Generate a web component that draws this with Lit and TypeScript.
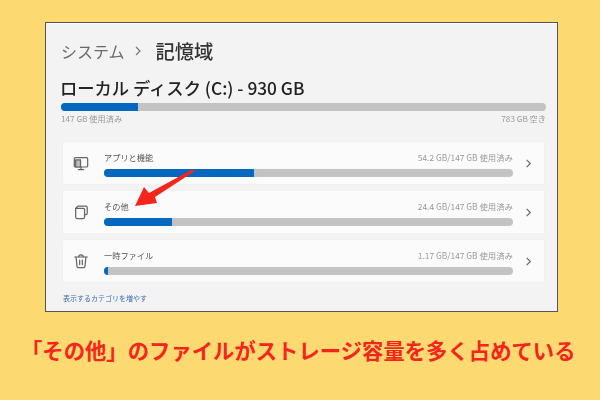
import { LitElement, html, css, svg } from "lit";
import { customElement } from "lit/decorators.js";

const icons = {
  apps: svg`<path d="M3 3h12a1.5 1.5 0 0 1 1.5 1.5v7.5a1.5 1.5 0 0 1-1.5 1.5H3a1.5 1.5 0 0 1-1.5-1.5V4.500A1.500 1.500 0 0 1 3 3z"/><path d="M6 16.500h6M9 13.500v3"/><path d="M3 5.500h5.500v8H3z" fill="#bdbdbd"/>`,
  doc: svg`<path d="M3 5h8.500a1.500 1.500 0 0 1 1.500 1.500v8.500a1.500 1.500 0 0 1-1.500 1.500H5A2 2 0 0 1 3 14.500z"/><path d="M3 5 5.500 2.500h9a1.500 1.500 0 0 1 1.500 1.500v6.500a1.500 1.500 0 0 1-1.500 1.500H13"/>`,
  trash: svg`<path d="M2 4.500h14"/><path d="M6.500 4.500a2.500 2.500 0 0 1 5 0"/><path d="M3.500 4.500l1 10.500a1.500 1.500 0 0 0 1.500 1.500h6a1.500 1.500 0 0 0 1.500-1.500l1-10.500"/><path d="M7.500 8v5M10.500 8v5"/>`,
};

const rows = [
  { icon: icons.apps, label: "アプリと機能", used: "54.2 GB/147 GB 使用済み", pct: 36.7 },
  { icon: icons.doc, label: "その他", used: "24.4 GB/147 GB 使用済み", pct: 16.6 },
  { icon: icons.trash, label: "一時ファイル", used: "1.17 GB/147 GB 使用済み", pct: 0.9 },
];

@customElement("app-root")
export class AppRoot extends LitElement {
  static styles = css`
    :host {
      display: block;
      width: 600px;
      height: 400px;
      overflow: hidden;
      background: #fcd971;
      font-family: "Noto Sans CJK JP", "Noto Sans", sans-serif;
    }
    .page {
      display: flex;
      flex-direction: column;
      height: 400px;
      box-sizing: border-box;
      padding: 22px 42px 0 45px;
    }
    .window {
      position: relative;
      box-sizing: border-box;
      width: 513px;
      height: 290px;
      flex: none;
      background: #f3f3f3;
      border: 1px solid #555;
      box-shadow: inset 0 1px 0 #fff;
      padding: 14px 11px 0 15px;
      overflow: hidden;
    }
    .blur {
      filter: blur(0.5px);
      display: flex;
      flex-direction: column;
    }
    .crumbs {
      display: flex;
      align-items: center;
      height: 28px;
      font-size: 16px;
      color: #6a6a6a;
    }
    .crumbs svg {
      width: 10px;
      height: 10px;
      margin: 0 13px 0 8px;
      fill: none;
      stroke: #777;
      stroke-width: 1.2;
    }
    .crumbs b {
      color: #333;
      font-size: 19.3px;
      font-weight: 500;
    }
    .disk {
      margin: 10px 0 0 -1px;
      height: 26px;
      line-height: 26px;
      font-size: 17.3px;
      font-weight: 500;
      color: #222;
    }
    .track {
      height: 8px;
      border-radius: 4px;
      background: #c3c3c3;
      overflow: hidden;
    }
    .fill {
      height: 100%;
      background: #0467c0;
    }
    .main-track {
      margin-top: 2px;
      width: 485px;
    }
    .totals {
      display: flex;
      justify-content: space-between;
      width: 485px;
      margin-top: 2px;
      height: 11px;
      line-height: 11px;
      font-size: 8.2px;
      color: #999;
    }
    .cards {
      display: flex;
      flex-direction: column;
      gap: 5px;
      margin: 17px 0 0 1px;
      width: 483px;
    }
    .card {
      display: flex;
      align-items: center;
      box-sizing: border-box;
      height: 44px;
      padding-left: 10px;
      background: #fbfbfb;
      border: 1px solid #f0f0f0;
      border-radius: 3px;
    }
    .icon {
      width: 16px;
      height: 16px;
      flex: none;
      fill: none;
      stroke: #666;
      stroke-width: 1.4;
      stroke-linejoin: round;
      stroke-linecap: round;
    }
    .body {
      width: 409px;
      margin: 2px 0 0 15px;
      flex: none;
    }
    .line {
      display: flex;
      justify-content: space-between;
      align-items: center;
      height: 11px;
      margin-bottom: 6px;
      font-size: 8.2px;
      color: #555;
    }
    .line span:last-child {
      font-size: 8.4px;
      color: #999;
    }
    .chev {
      width: 9px;
      height: 9px;
      margin-left: 11px;
      fill: none;
      stroke: #666;
      stroke-width: 1.3;
    }
    .link {
      margin: 9px 0 0 2px;
      font-size: 7px;
      line-height: 12px;
      color: #3b6db0;
    }
    .arrow {
      position: absolute;
      left: -46px;
      top: -23px;
      width: 600px;
      height: 400px;
      fill: #f5251c;
      pointer-events: none;
    }
    .caption {
      margin: 22px 0 0 -24px;
      white-space: nowrap;
      font-size: 21.35px;
      line-height: 32px;
      font-weight: 700;
      color: #f5251c;
    }
  `;

  render() {
    return html`<div class="page">
      <div class="window">
        <div class="blur">
          <div class="crumbs">
            <span>システム</span>
            <svg viewBox="0 0 10 10"><path d="M3 1l4 4-4 4" /></svg>
            <b>記憶域</b>
          </div>
          <div class="disk">ローカル ディスク (C:) - 930 GB</div>
          <div class="track main-track"><div class="fill" style="width:15.9%"></div></div>
          <div class="totals"><span>147 GB 使用済み</span><span>783 GB 空き</span></div>
          <div class="cards">
            ${rows.map(
              (r) => html`<div class="card">
                <svg class="icon" viewBox="0 0 18 18">${r.icon}</svg>
                <div class="body">
                  <div class="line"><span>${r.label}</span><span>${r.used}</span></div>
                  <div class="track"><div class="fill" style="width:${r.pct}%"></div></div>
                </div>
                <svg class="chev" viewBox="0 0 10 10"><path d="M3 1l4 4-4 4" /></svg>
              </div>`
            )}
          </div>
          <div class="link">表示するカテゴリを増やす</div>
        </div>
        <svg class="arrow" viewBox="0 0 600 400">
          <polygon points="135,206 144,187 149,193 192,169.5 195,171 155,197 157,203" />
        </svg>
      </div>
      <div class="caption">「その他」のファイルがストレージ容量を多く占めている</div>
    </div>`;
  }
}
